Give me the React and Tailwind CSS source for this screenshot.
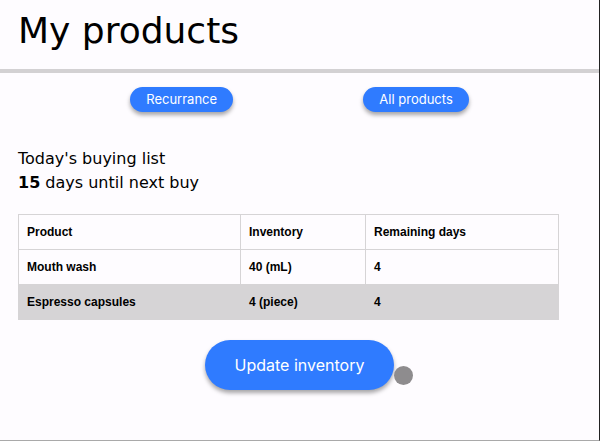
const columns = [
  { label: "Product", width: "w-[222px]" },
  { label: "Inventory", width: "w-[125px]" },
  { label: "Remaining days", width: "w-auto" },
];

const products = [
  { name: "Mouth wash", inventory: "40 (mL)", days: 4 },
  { name: "Espresso capsules", inventory: "4 (piece)", days: 4 },
];

function PillButton({ children, className }) {
  return (
    <button
      type="button"
      className={`rounded-full bg-[#2f7bff] font-['Inter',sans-serif] text-white shadow-[0_3px_4px_rgba(0,0,0,0.35)] ${className}`}
    >
      {children}
    </button>
  );
}

export default function App() {
  return (
    <div className="min-h-screen border-r border-b border-r-[#222222] border-b-[#a9a9a9] bg-[#fefcff] font-['DejaVu_Sans',Verdana,sans-serif] text-black">
      <header className="border-b-4 border-[#d3d1d3] px-[18px] pt-2 pb-4">
        <h1 className="text-[36px] leading-[45px]">My products</h1>
      </header>

      <nav className="flex justify-evenly pt-[14px]">
        <PillButton className="px-4 text-[13px] leading-[25px]">Recurrance</PillButton>
        <PillButton className="px-4 text-[13px] leading-[25px]">All products</PillButton>
      </nav>

      <main className="px-[18px] pt-[35px]">
        <h2 className="text-base leading-6">Today's buying list</h2>
        <p className="text-base leading-6">
          <strong>15</strong> days until next buy
        </p>

        <table className="mt-[19px] w-full max-w-[541px] table-fixed border-collapse border border-[#d6d4d6] text-left font-['Liberation_Sans',Arial,sans-serif] text-xs leading-[18px] font-bold">
          <thead>
            <tr>
              {columns.map((column) => (
                <th
                  key={column.label}
                  scope="col"
                  className={`border border-[#d6d4d6] p-2 ${column.width}`}
                >
                  {column.label}
                </th>
              ))}
            </tr>
          </thead>
          <tbody>
            {products.map((product) => (
              <tr key={product.name} className="even:bg-[#d6d4d6]">
                <td className="border border-[#d6d4d6] p-2">{product.name}</td>
                <td className="border border-[#d6d4d6] p-2">{product.inventory}</td>
                <td className="border border-[#d6d4d6] p-2">{product.days}</td>
              </tr>
            ))}
          </tbody>
        </table>

        <div className="flex justify-center pt-5">
          <div className="relative">
            <PillButton className="px-[30px] text-base leading-[50px]">Update inventory</PillButton>
            <span
              aria-hidden="true"
              className="absolute top-[26px] left-full size-[19px] rounded-full bg-[#8e8c8e]"
            />
          </div>
        </div>
      </main>
    </div>
  );
}
